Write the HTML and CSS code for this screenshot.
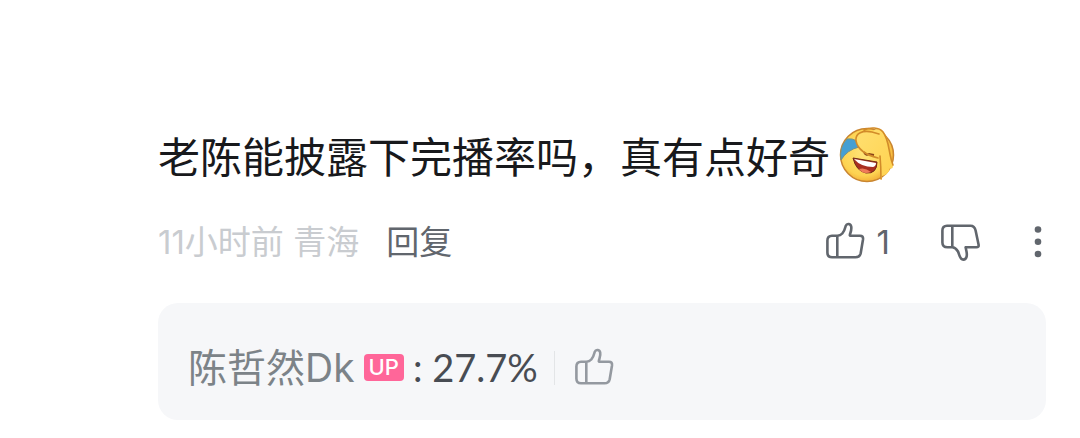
FILE: index.html
```html
<!DOCTYPE html>
<html lang="zh-CN">
<head>
<meta charset="utf-8">
<meta name="viewport" content="width=device-width, initial-scale=1">
<title>评论</title>
<link rel="stylesheet" href="styles.css">
</head>
<body>
<svg class="symbols" aria-hidden="true">
  <symbol id="thumb" viewBox="0 0 40 40">
    <path d="M12.3 13.7H7Q2.4 13.7 2.4 18.5V30.5Q2.4 35.3 7 35.3H30.5Q34.8 35.3 35.7 31.2L38 17.5Q38.5 13.7 35 13.7H25.2C24.6 13.7 24.8 12.8 25.4 11C26.2 8.5 26.6 6.5 26.2 4.5C25.5 1.5 21.8 1.2 20.8 3.8C20 7 19 9.5 17.3 11.5C15.8 13.2 14.5 13.7 12.3 13.7V35.3"/>
  </symbol>
  <symbol id="thumb-down" viewBox="0 0 40 40">
    <path d="M12.3 3.7H7Q2.4 3.7 2.4 8.5V20.5Q2.4 25.3 7.5 25.3H12.3C15 25.3 16.8 27.5 18 29.5C19.4 32 19.6 37.6 23.3 37.6C27 37.6 27.2 33 26.5 29.5L25.6 25.3H36.5Q39 25.3 38.6 22.8L35.6 8.5Q34.5 3.7 30.5 3.7H12.3V25.3"/>
  </symbol>
</svg>
<main class="comment">
  <p class="comment-text"><span>老陈能披露下完播率吗，真有点好奇</span>
    <svg class="emoji" viewBox="0 0 56 56" role="img" aria-label="笑哭捂脸">
      <defs>
        <radialGradient id="face" cx="45%" cy="45%" r="58%"><stop offset="0" stop-color="#ffe57a"/><stop offset=".75" stop-color="#fdd351"/><stop offset="1" stop-color="#f2ab35"/></radialGradient>
        <linearGradient id="hand" x1="0" y1="0" x2="1" y2="1"><stop offset="0" stop-color="#ffdf70"/><stop offset="1" stop-color="#ffd24f"/></linearGradient>
      </defs>
      <circle cx="28" cy="28" r="26.5" fill="url(#face)" stroke="#c98530" stroke-width="1.5"/>
      <path d="M8 12Q13 11 18 14L20 20Q8 23 2 33Q0 20 8 12Z" fill="#459fd3" stroke="#7b9182"/>
      <path d="M14 31Q26 33 38 35Q38 47 27 46Q17 44 14 31Z" fill="#a92f20" stroke="#702b17"/>
      <path d="M15 32Q26 34 37 36Q37 39 34 40Q22 40 15 32Z" fill="#fff"/>
      <path d="M20 42Q26 40 32 45Q24 48 20 42Z" fill="#ef7b59"/>
      <path d="M17 14C16 6 24 3 33 5C38 0 43 2 46 7C51 16 49 26 54 38Q54 43 51 41L50 44Q48 48 43 49V53L42 52Q42 41 39 31C31 29 19 24 17 14Z" fill="url(#hand)"/>
      <path d="M25 25Q27 29 30 27L35 28" fill="none" stroke="#8a4219" stroke-width="2"/>
      <path d="M39 31C31 29 19 24 17 14C16 6 24 3 33 5L40 7M25 3C31 0 40 0 44 5C51 14 49 26 54 38M41 29Q42 40 42 52" fill="none" stroke="#d28b29" stroke-width="1.6" stroke-linecap="round"/>
    </svg>
  </p>
  <div class="meta">
    <span class="origin"><time>11小时前</time> 青海</span>
    <button class="reply-button" type="button">回复</button>
    <div class="actions">
      <button class="action" type="button" aria-label="点赞 1"><svg class="icon"><use href="#thumb"/></svg><span class="count">1</span></button>
      <button class="action" type="button" aria-label="点踩"><svg class="icon"><use href="#thumb-down"/></svg></button>
      <button class="action" type="button" aria-label="更多"><svg class="dots" viewBox="0 0 16 40"><circle cx="8" cy="7.5" r="3.3"/><circle cx="8" cy="19.7" r="3.3"/><circle cx="8" cy="32" r="3.3"/></svg></button>
    </div>
  </div>
  <section class="reply">
    <a class="author" href="#author">陈哲然Dk</a>
    <span class="badge">UP</span>
    <span class="reply-text">: 27.7%</span>
    <button class="action reply-like" type="button" aria-label="点赞回复"><svg class="icon"><use href="#thumb"/></svg></button>
  </section>
</main>
</body>
</html>
```
FILE: styles.css
```css
* { box-sizing: border-box; }

body {
  margin: 0;
  background: #fff;
  font-family: Inter, "Noto Sans CJK SC", sans-serif;
}

button {
  padding: 0;
  border: 0;
  background: none;
  color: inherit;
  font: inherit;
  cursor: pointer;
}

svg { display: block; flex: none; }

.symbols { position: absolute; width: 0; height: 0; }

.comment { padding: 126px 34px 18px 158px; }

.comment-text {
  display: flex;
  align-items: center;
  gap: 9px;
  margin: 0;
  color: #18191c;
  font-size: 42px;
  line-height: 64px;
}

.emoji { width: 56px; height: 56px; margin-bottom: 6px; }

.meta {
  display: flex;
  align-items: center;
  gap: 27px;
  margin-top: 28px;
  color: #61666d;
  font-size: 33px;
  line-height: 48px;
}

.origin { color: #c9ccd0; }

.actions {
  display: flex;
  align-items: center;
  gap: 50px;
  margin-left: auto;
}

.action { display: flex; align-items: center; gap: 12px; }

.icon {
  width: 40px;
  height: 40px;
  fill: none;
  stroke: currentColor;
  stroke-width: 2.6;
  stroke-linejoin: round;
}

.dots { width: 16px; height: 40px; fill: currentColor; }

.reply {
  display: flex;
  align-items: center;
  margin-top: 37px;
  padding: 36px 30px 24px;
  border-radius: 20px;
  background: #f6f7f9;
  font-size: 38px;
  line-height: 57px;
}

.author { color: #7c8388; font-size: 39px; text-decoration: none; }

.badge {
  margin: 0 9px;
  padding: 0 5px;
  border-radius: 4px;
  background: #ff6699;
  color: #fff;
  font-size: 22px;
  font-weight: 500;
  line-height: 27px;
}

.reply-text { color: #484c53; font-family: Lato, sans-serif; }

.reply-like {
  margin-left: 16px;
  padding-left: 19px;
  border-left: 1px solid #e3e5e7;
  height: 34px;
  color: #9499a0;
}
```
